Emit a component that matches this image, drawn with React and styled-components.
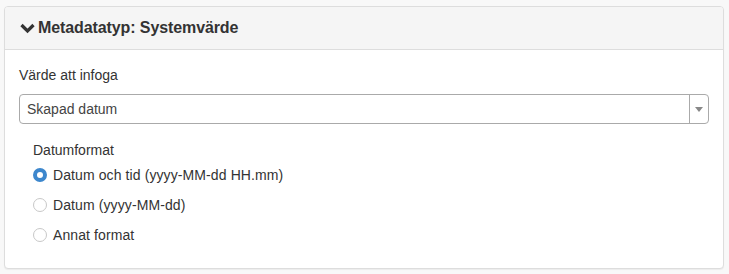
import React, { useState } from 'react'
import styled, { createGlobalStyle } from 'styled-components'

const GlobalStyle = createGlobalStyle`
  html, body {
    margin: 0;
    padding: 0;
    background: #f8f8f8;
  }
  body {
    font-family: "Liberation Sans", Arial, sans-serif;
    font-size: 14px;
    color: #333;
  }
`

const Page = styled.div`
  padding: 6px 5px 5px 4px;
`

const Panel = styled.section`
  background: #fff;
  border: 1px solid #ddd;
  border-radius: 4px;
  box-shadow: 0 1px 1px rgba(0, 0, 0, 0.05);
`

const PanelHeading = styled.header`
  display: flex;
  align-items: center;
  gap: 3px;
  height: 43px;
  padding: 0 15px;
  background: #f5f5f5;
  border-bottom: 1px solid #ddd;
  border-radius: 3px 3px 0 0;
  box-sizing: border-box;
`

const Title = styled.h3`
  margin: 0;
  font-size: 16px;
  font-weight: bold;
  color: #333;
  letter-spacing: -0.1px;
`

const PanelBody = styled.div`
  padding: 15px 14px 18px 14px;
`

const Label = styled.label`
  display: block;
  line-height: 20px;
  margin-bottom: 9px;
`

const SelectBox = styled.div`
  display: flex;
  height: 30px;
  box-sizing: border-box;
  border: 1px solid #aaa;
  border-radius: 4px;
  background: #fff;
`

const SelectValue = styled.span`
  flex: 1;
  padding-left: 7px;
  line-height: 28px;
  color: #444;
`

const SelectArrow = styled.span`
  width: 18px;
  border-left: 1px solid #aaa;
  display: flex;
  align-items: center;
  justify-content: center;
  &::after {
    content: '';
    border-left: 4px solid transparent;
    border-right: 4px solid transparent;
    border-top: 5px solid #888;
  }
`

const Fieldset = styled.div`
  margin-top: 16px;
  padding-left: 14px;
`

const GroupLabel = styled.div`
  line-height: 20px;
`

const RadioRow = styled.label`
  display: flex;
  align-items: center;
  gap: 6px;
  height: 30px;
  letter-spacing: 0.1px;
  cursor: pointer;
`

const RadioDot = styled.span`
  width: 14px;
  height: 14px;
  box-sizing: border-box;
  border-radius: 50%;
  border: ${p => (p.$checked ? '4px solid #3d87cd' : '1px solid #c8c8c8')};
  background: #fff;
  flex-shrink: 0;
`

const Chevron = () => (
  <svg width="15" height="14" viewBox="0 0 15 14">
    <path d="M1.5 4 L7.5 10 L13.5 4" fill="none" stroke="#333" strokeWidth="3.2" strokeLinejoin="miter" />
  </svg>
)

const formats = [
  'Datum och tid (yyyy-MM-dd HH.mm)',
  'Datum (yyyy-MM-dd)',
  'Annat format',
]

export default function App() {
  const [selected, setSelected] = useState(0)
  return (
    <>
      <GlobalStyle />
      <Page>
        <Panel>
          <PanelHeading>
            <Chevron />
            <Title>Metadatatyp: Systemvärde</Title>
          </PanelHeading>
          <PanelBody>
            <Label>Värde att infoga</Label>
            <SelectBox>
              <SelectValue>Skapad datum</SelectValue>
              <SelectArrow />
            </SelectBox>
            <Fieldset>
              <GroupLabel>Datumformat</GroupLabel>
              {formats.map((f, i) => (
                <RadioRow key={f} onClick={() => setSelected(i)}>
                  <RadioDot $checked={selected === i} />
                  {f}
                </RadioRow>
              ))}
            </Fieldset>
          </PanelBody>
        </Panel>
      </Page>
    </>
  )
}
